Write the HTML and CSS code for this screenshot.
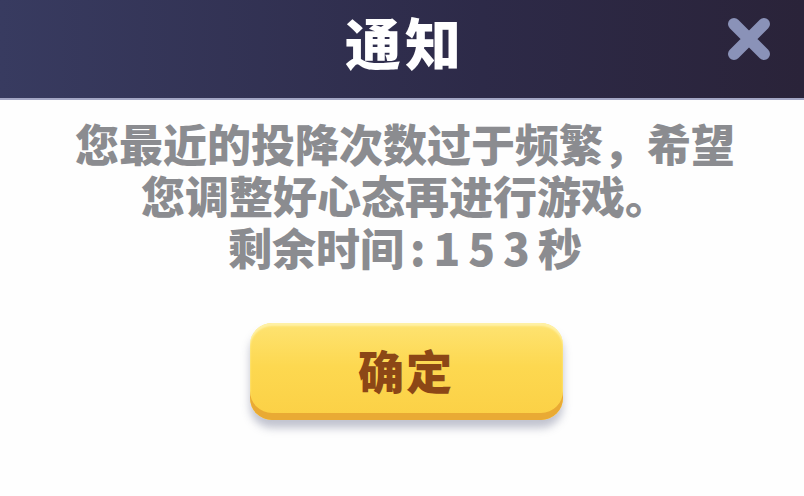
FILE: index.html
```html
<!DOCTYPE html>
<html lang="zh-CN">
<head>
    <meta charset="UTF-8">
    <meta name="viewport" content="width=device-width, initial-scale=1.0">
    <title>通知</title>
    <link rel="stylesheet" href="styles.css">
</head>
<body>
    <div class="dialog">
        <div class="dialog-header">
            <h1 class="dialog-title">通知</h1>
            <button class="close-btn" aria-label="关闭">
                <svg viewBox="0 0 50 50" width="50" height="50">
                    <path d="M10 10 L40 40 M40 10 L10 40" stroke="#8a92b8" stroke-width="12" stroke-linecap="round" fill="none"/>
                </svg>
            </button>
        </div>

        <div class="dialog-body">
            <p class="message">
                您最近的投降次数过于频繁，希望<br>
                您调整好心态再进行游戏。<br>
                剩余时间<span class="timer">:<span id="countdown">153</span></span>秒
            </p>
            <button class="confirm-btn">确定</button>
        </div>
    </div>
</body>
</html>
```

FILE: styles.css
```css
* {
    margin: 0;
    padding: 0;
    box-sizing: border-box;
    font-family: "Noto Sans CJK SC", "Noto Sans", sans-serif;
}

body {
    width: 804px;
    height: 496px;
    background: #fefefe;
    overflow: hidden;
}

.dialog {
    display: flex;
    flex-direction: column;
    height: 100%;
}

.dialog-header {
    position: relative;
    height: 100px;
    background: linear-gradient(90deg, #383b60, #2d2a48 60%, #2a2339);
    border-bottom: 2px solid #a3a6c4;
    display: flex;
    justify-content: center;
    align-items: center;
}

.dialog-title {
    color: #fff;
    font-size: 56px;
    font-weight: 900;
    letter-spacing: 4px;
    line-height: 1;
    margin-top: -16px;
    margin-left: 6px;
}

.close-btn {
    position: absolute;
    right: 30px;
    top: 14px;
    width: 50px;
    height: 50px;
    border: none;
    background: none;
    cursor: pointer;
}

.close-btn svg {
    display: block;
}

.dialog-body {
    display: flex;
    flex-direction: column;
    align-items: center;
    padding-top: 17px;
}

.message {
    color: #8b8c90;
    font-size: 44px;
    font-weight: 900;
    line-height: 52px;
    text-align: center;
    margin-left: 6px;
}

.timer {
    letter-spacing: 8px;
    margin-left: 6px;
}

.confirm-btn {
    margin-top: 50px;
    margin-left: 8px;
    width: 313px;
    height: 97px;
    border: none;
    border-radius: 22px;
    background: linear-gradient(180deg, #fee372, #fdd850 45%, #fbd045);
    box-shadow: inset 0 -7px 0 #e9aa34, inset 0 3px 2px #fff1a6, 0 8px 8px rgba(120, 124, 150, 0.45);
    color: #8c4716;
    font-size: 46px;
    font-weight: 900;
    letter-spacing: 2px;
    padding-bottom: 6px;
    cursor: pointer;
}
```
